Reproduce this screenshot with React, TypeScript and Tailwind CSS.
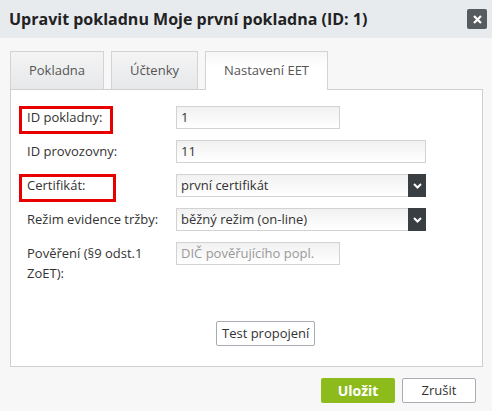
import React from "react";

const Chevron: React.FC = () => (
  <svg width="9" height="6" viewBox="0 0 9 6">
    <polyline points="1,1 4.5,4.5 8,1" fill="none" stroke="#fff" strokeWidth="2" />
  </svg>
);

const inputCls =
  "h-[23px] border border-[#d2d2d2] bg-gradient-to-b from-[#f1f1f1] to-white px-[4px] text-[13px] leading-[21px] text-[#333]";

const Row: React.FC<{ label: React.ReactNode; children: React.ReactNode }> = ({ label, children }) => (
  <div className="flex items-start">
    <div className="w-[149px] shrink-0 text-[13px] leading-[23px] text-[#333]">{label}</div>
    {children}
  </div>
);

const Select: React.FC<{ value: string }> = ({ value }) => (
  <div className={"flex w-[250px] items-stretch " + inputCls + " pr-0"}>
    <span className="flex-1">{value}</span>
    <span className="-my-px -mr-px flex w-[18px] items-center justify-center bg-[#393e42]">
      <Chevron />
    </span>
  </div>
);

const Marked: React.FC<{ children: React.ReactNode; w: string }> = ({ children, w }) => (
  <span className="relative">
    {children}
    <span className={"pointer-events-none absolute -left-[8px] -top-[2px] h-[28px] border-[3px] border-[#e80000] " + w} />
  </span>
);

const App: React.FC = () => {
  return (
    <div className="h-[411px] w-[492px] bg-[#f7f7f7] font-['Open_Sans',sans-serif]">
      <div className="flex h-[38px] items-center justify-between bg-[#e8ebee] pl-[9px] pr-[5px]">
        <h1 className="text-[16px] font-bold text-[#222]">Upravit pokladnu Moje první pokladna (ID: 1)</h1>
        <button className="flex h-[20px] w-[20px] items-center justify-center rounded-[2px] bg-[#565b60]">
          <svg width="9" height="9" viewBox="0 0 9 9">
            <path d="M1 1 L8 8 M8 1 L1 8" stroke="#fff" strokeWidth="2.2" />
          </svg>
        </button>
      </div>

      <div className="px-[10px] pt-[13px]">
        <div className="flex gap-[7px]">
          <div className="flex h-[38px] w-[94px] items-center justify-center border border-b-0 border-[#d3d3d3] bg-gradient-to-b from-[#f4f4f4] to-[#e6e8ea] text-[13px] text-[#555]">
            Pokladna
          </div>
          <div className="flex h-[38px] w-[87px] items-center justify-center border border-b-0 border-[#d3d3d3] bg-gradient-to-b from-[#f4f4f4] to-[#e6e8ea] text-[13px] text-[#555]">
            Účtenky
          </div>
          <div className="relative z-10 -mb-px flex h-[39px] w-[123px] items-center justify-center border border-b-0 border-[#d3d3d3] bg-gradient-to-b from-[#f6f6f6] to-white to-40% text-[13px] text-[#555]">
            Nastavení EET
          </div>
        </div>

        <div className="h-[278px] w-[473px] border border-[#cfcfcf] bg-white pl-[16px] pt-[16px]">
          <div className="flex flex-col gap-[11px]">
            <Row label={<Marked w="w-[94px]">ID pokladny:</Marked>}>
              <div className={"w-[164px] " + inputCls}>1</div>
            </Row>
            <Row label="ID provozovny:">
              <div className={"w-[250px] " + inputCls}>11</div>
            </Row>
            <Row label={<Marked w="w-[97px]">Certifikát:</Marked>}>
              <Select value="první certifikát" />
            </Row>
            <Row label="Režim evidence tržby:">
              <Select value="běžný režim (on-line)" />
            </Row>
            <Row
              label={
                <div className="pt-[1px] leading-[20px]">
                  Pověření (§9 odst.1
                  <br />
                  ZoET):
                </div>
              }
            >
              <div className={"w-[164px] " + inputCls + " text-[#999]"}>DIČ pověřujícího popl.</div>
            </Row>
          </div>
          <div className="mt-[37px] pl-[189px]">
            <button className="h-[25px] rounded-[2px] border border-[#a8adb3] bg-white px-[5px] text-[13px] text-[#333]">
              Test propojení
            </button>
          </div>
        </div>

        <div className="flex justify-end gap-[7px] pr-[6px] pt-[11px]">
          <button className="h-[25px] w-[74px] rounded-[2px] bg-[#8dbb1c] text-[14px] font-bold text-white">
            Uložit
          </button>
          <button className="h-[25px] w-[74px] rounded-[2px] border border-[#a8adb3] bg-white text-[13px] text-[#333]">
            Zrušit
          </button>
        </div>
      </div>
    </div>
  );
};

export default App;
